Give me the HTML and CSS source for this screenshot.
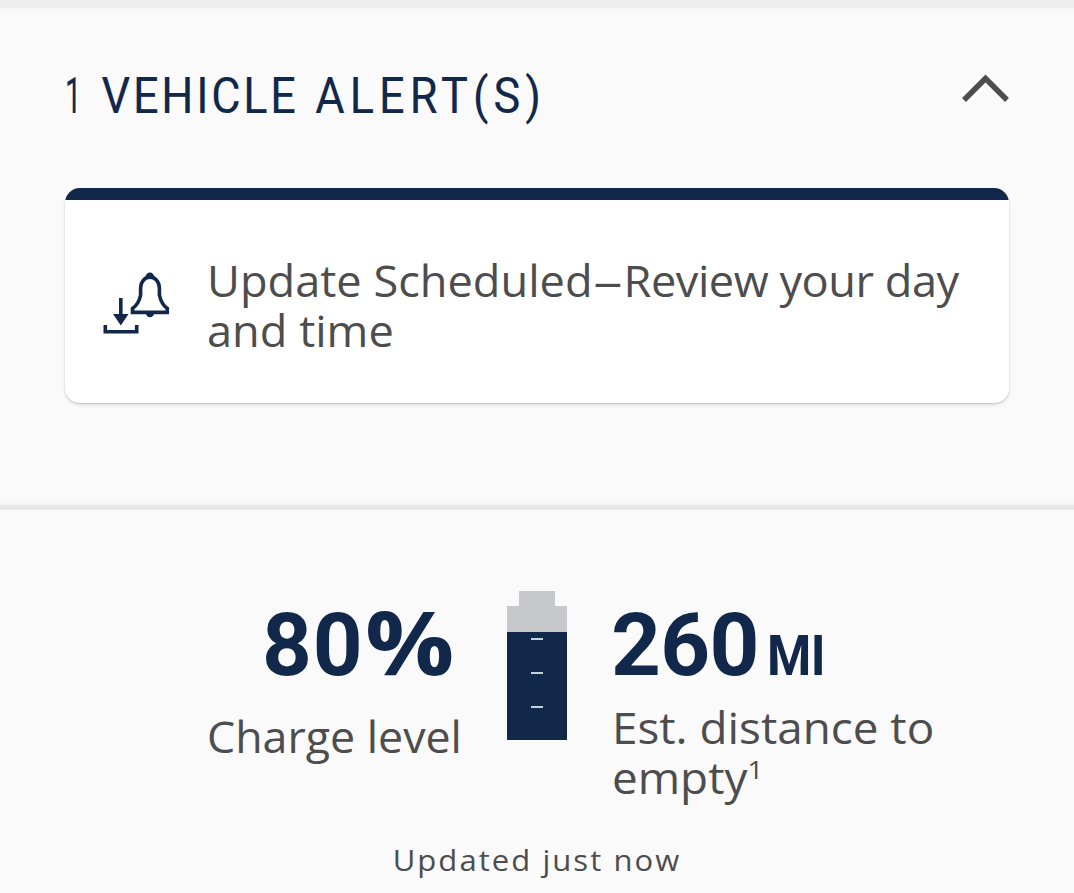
FILE: index.html
```html
<!DOCTYPE html>
<html lang="en">

<head>
    <meta charset="UTF-8">
    <meta name="viewport" content="width=device-width, initial-scale=1.0">
    <title>Vehicle Status</title>
    <link rel="stylesheet" href="styles.css">
</head>

<body>
    <section class="alerts">
        <div class="alerts-header">
            <h2><span class="count">1</span> <span class="vehicle">VEHICLE</span> <span class="alert">ALERT(S)</span></h2>
            <svg class="chevron" viewBox="0 0 48 30" width="48" height="30">
                <path d="M3 26 L24.5 4.5 L46 26" fill="none" stroke="#4d4d4d" stroke-width="5.5" />
            </svg>
        </div>
        <div class="alert-card">
            <svg class="update-icon" viewBox="0 0 68 66" width="68" height="66">
                <g fill="none" stroke="#11284b" stroke-width="3.6">
                    <path d="M2.3 54 V60.8 H33.7 V54" />
                    <path d="M17.8 27 V44" />
                    <path d="M29.5 41.4 V37.5 C34.5 34 36.5 29.5 37.6 24 V17 C38.5 2.5 55.5 2.5 56.4 17 V24 C57.5 29.5 59.5 34 64.3 37.5 V41.4 Z" />
                </g>
                <path d="M10 43 H25.5 L17.8 54.5 Z M42.5 6.5 a4.4 5 0 0 1 8.8 0 Z M42.8 42 H51.2 a4.2 4.2 0 0 1 -8.4 0 Z" fill="#11284b" />
            </svg>
            <p>Update Scheduled<span class="dash">–</span><span class="review">Review your day</span><br>and time</p>
        </div>
    </section>

    <section class="status">
        <div class="charge">
            <div class="value">80<span class="percent">%</span></div>
            <p>Charge level</p>
        </div>
        <div class="battery">
            <div class="battery-cap"></div>
            <div class="battery-body">
                <div class="battery-fill">
                    <i></i>
                    <i></i>
                    <i></i>
                </div>
            </div>
        </div>
        <div class="distance">
            <div class="value">260<span class="unit">MI</span></div>
            <p>Est. distance to<br>empty<sup>1</sup></p>
        </div>
    </section>
    <p class="updated">Updated just now</p>
</body>

</html>
```
FILE: styles.css
```css
body {
    margin: 0;
    height: 893px;
    background: #fafafa;
    color: #4d4d4d;
    font-family: "Open Sans", sans-serif;
    overflow: hidden;
}

h2,
p {
    margin: 0;
}

.alerts {
    box-sizing: border-box;
    height: 510px;
    padding: 66px 65px 0;
    background:
        linear-gradient(#ededed 0, #ededed 7px, #f7f7f7 9px, #fafafa 15px, transparent 15px),
        linear-gradient(to top, #e9e9e9 0, #e9e9e9 4px, #f5f5f5 6px, #fafafa 13px);
}

.alerts-header {
    display: flex;
    justify-content: space-between;
    height: 122px;
}

h2 {
    color: #11284b;
    font-family: Roboto, sans-serif;
    font-size: 50px;
    font-weight: 400;
    line-height: 61px;
    letter-spacing: 4px;
    white-space: nowrap;
    transform: scaleX(0.9);
    transform-origin: left;
    -webkit-text-stroke: 0.15px #11284b;
}

.count {
    display: inline-block;
    margin-right: -8px;
    transform: scaleX(0.65);
    transform-origin: left;
}

.vehicle {
    letter-spacing: 3.1px;
}

.alert {
    margin-left: 2px;
    letter-spacing: 5.7px;
}

.chevron {
    margin-top: 8px;
}

.alert-card {
    box-sizing: border-box;
    display: flex;
    height: 215px;
    padding: 68px 0 0 38px;
    background: linear-gradient(#11284b 12px, #fff 12px);
    border-radius: 15px;
    box-shadow: 0 1px 2px rgba(0, 0, 0, 0.22), 0 3px 4px rgba(0, 0, 0, 0.05);
}

.update-icon {
    margin: 15px 36px 0 0;
}

p {
    font-size: 43px;
    line-height: 50px;
    white-space: nowrap;
    transform: scaleX(1.05);
    transform-origin: left;
}

.dash {
    display: inline-block;
    margin: 0 4px;
    transform: scaleX(1.3);
}

.review {
    letter-spacing: -0.45px;
}

.status {
    display: flex;
    height: 330px;
}

.charge {
    box-sizing: border-box;
    flex: 0 0 507px;
    padding: 85px 0 0 207px;
}

.value {
    height: 100px;
    color: #11284b;
    font-family: Roboto, sans-serif;
    font-size: 87px;
    font-weight: 700;
    line-height: 100px;
    white-space: nowrap;
}

.charge .value {
    padding-left: 55px;
    letter-spacing: 0.8px;
}

.charge p {
    margin-top: 17px;
    transform: scaleX(1.04);
}

.percent {
    display: inline-block;
    margin-left: 2px;
    font-family: "Open Sans", sans-serif;
    line-height: 90px;
    transform: scaleX(1.14);
    transform-origin: left;
}

.battery {
    width: 60px;
    padding-top: 81px;
}

.battery-cap {
    width: 36px;
    height: 15px;
    margin: 0 auto;
    background: #c6c8cc;
}

.battery-body {
    padding-top: 26px;
    background: #c6c8cc;
}

.battery-fill {
    display: flex;
    flex-direction: column;
    align-items: center;
    gap: 32px;
    box-sizing: border-box;
    height: 108px;
    padding-top: 6px;
    background: #11284b;
}

.battery-fill i {
    width: 12px;
    height: 2px;
    background: #c5d3dc;
}

.distance {
    padding: 85px 0 0 45px;
}

.distance .value {
    margin-left: -1px;
    letter-spacing: -0.7px;
}

.distance p {
    margin-top: 8px;
    transform: scaleX(1.065);
}

.unit {
    display: inline-block;
    margin-left: 8px;
    font-size: 55px;
    line-height: 60px;
    transform: scaleX(0.92);
    transform-origin: left;
}

sup {
    font-size: 26px;
    line-height: 0;
}

.updated {
    font-size: 30px;
    letter-spacing: 2px;
    line-height: 40px;
    text-align: center;
    transform: scaleX(1.033);
    transform-origin: center;
}
```
